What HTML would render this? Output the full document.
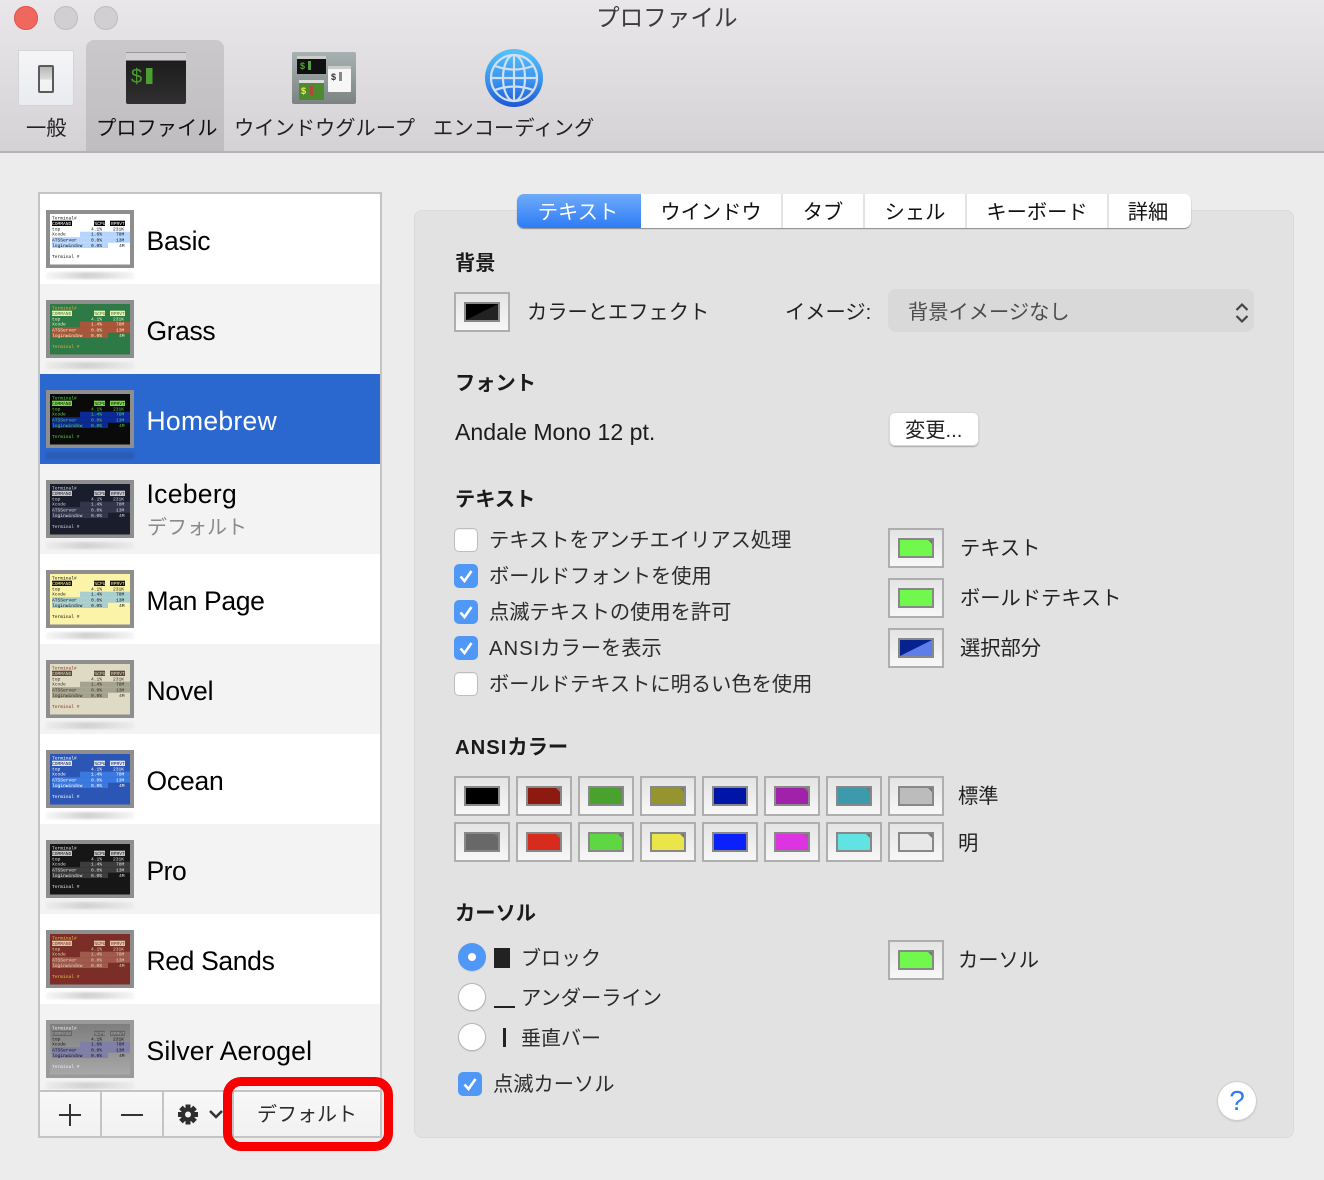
<!DOCTYPE html>
<html lang="ja"><head><meta charset="utf-8"><title>プロファイル</title>
<style>
html,body{margin:0;padding:0}
body{width:1324px;height:1180px;position:relative;overflow:hidden;background:#ececec;font-family:"Liberation Sans","Noto Sans CJK JP",sans-serif;color:#111}
.a,.t,.h,.n{position:absolute}
.t,.h,.n{white-space:nowrap;font-size:20.25px;line-height:28px;margin-top:1px}
.h{font-weight:700;color:#1a1a1a;margin-top:2px}
.n{font-size:26.5px;line-height:32px;left:146.5px;color:#000;margin-top:0}
.row{position:absolute;left:40px;width:340px;height:90px}
.g{background:#f3f3f3}.w{background:#fff}
.th{position:absolute;left:46px;width:88px;height:58px;filter:blur(.35px)}
.th text{font:4.6px "Liberation Mono",monospace}
.sh{position:absolute;left:46px;width:88px;height:7px;background:linear-gradient(90deg,rgba(200,200,200,.15),#d2d2d2 45%,#d8d8d8 60%,rgba(200,200,200,.15));filter:blur(1px)}
.well{position:absolute;width:52px;height:36px;border:2px solid #aeaeae;background:linear-gradient(#e4e4e4,#f7f7f7)}
.well i{position:absolute;left:8px;top:8px;width:32px;height:16px;border:2px solid #888;display:block}
.well.c i:after{content:"";position:absolute;right:0;top:0;border-style:solid;border-width:0 4px 4px 0;border-color:transparent #777 transparent transparent}
.cb{position:absolute;width:24px;height:24px;border-radius:5px;box-sizing:border-box}
.cb.off{background:#fff;border:1px solid #bdbdbd;box-shadow:inset 0 1px 1px #eee}
.cb.on{background:#4f98f7}
.cb svg{position:absolute;left:0;top:0}
.rd{position:absolute;left:458px;width:28px;height:28px;border-radius:50%;box-sizing:border-box;background:#fff;border:1px solid #b5b5b5;box-shadow:0 1px 1px #ccc}
.tab{position:absolute;top:194px;height:34px;line-height:38px;text-align:center;font-size:20.25px;color:#111;background:#fff;border-right:2px solid #e4e4e4;box-sizing:border-box}
</style></head><body>

<!-- Toolbar -->
<div class="a" style="left:0;top:0;width:1324px;height:151px;background:linear-gradient(#e9e7e9,#d4d2d4)"></div>
<div class="a" style="left:0;top:151px;width:1324px;height:2px;background:#b4b3b4"></div>
<div class="a" style="left:14px;top:6px;width:24px;height:24px;border-radius:50%;background:#f0675d;box-shadow:inset 0 0 0 1px #e0554c"></div>
<div class="a" style="left:54px;top:6px;width:24px;height:24px;border-radius:50%;background:#d1cfd1;box-shadow:inset 0 0 0 1px #bfbdbf"></div>
<div class="a" style="left:94px;top:6px;width:24px;height:24px;border-radius:50%;background:#d1cfd1;box-shadow:inset 0 0 0 1px #bfbdbf"></div>
<div class="t" style="left:596px;top:1px;font-size:23.6px;line-height:34px;color:#3d3c3d">プロファイル</div>
<div class="a" style="left:86px;top:40px;width:138px;height:111px;border-radius:8px 8px 0 0;background:linear-gradient(#cac8ca,#bfbdbf)"></div>

<svg class="a" style="left:18px;top:50px" width="56" height="56" viewBox="0 0 56 56">
<defs><linearGradient id="sw" x1="0" y1="0" x2="0" y2="1"><stop offset="0" stop-color="#f5f5f6"/><stop offset="1" stop-color="#e9ebf0"/></linearGradient>
<linearGradient id="sk" x1="0" y1="0" x2="0" y2="1"><stop offset="0" stop-color="#b4b4b4"/><stop offset=".5" stop-color="#dcdcdc"/><stop offset=".55" stop-color="#f4f4f4"/><stop offset="1" stop-color="#f0f0f0"/></linearGradient></defs>
<rect x=".5" y=".5" width="55" height="55" rx="1" fill="url(#sw)" stroke="#d4d4d4"/>
<rect x="21" y="16" width="14" height="26" rx="1" fill="url(#sk)" stroke="#5a5a5a" stroke-width="2"/>
</svg>
<svg class="a" style="left:126px;top:52px" width="60" height="53" viewBox="0 0 60 53">
<defs><linearGradient id="tm" x1="0" y1="0" x2="0" y2="1"><stop offset="0" stop-color="#181818"/><stop offset="1" stop-color="#303030"/></linearGradient></defs>
<rect width="60" height="52" rx="2" fill="url(#tm)"/>
<path d="M0 2a2 2 0 0 1 2-2h56a2 2 0 0 1 2 2v6H0z" fill="#d2d0d2"/>
<rect x="0" y="0" width="60" height="1" fill="#999"/>
<rect x="0" y="8" width="60" height="1" fill="#777"/>
<text x="5" y="31" style="font:20px 'Liberation Sans',sans-serif" fill="#4b9e32">$</text>
<rect x="20" y="16" width="6.500" height="16" fill="#4b9e32"/>
</svg>
<svg class="a" style="left:292px;top:52px" width="64" height="52" viewBox="0 0 64 52">
<defs><linearGradient id="gr" x1="0" y1="0" x2="0" y2="1"><stop offset="0" stop-color="#a8b1b1"/><stop offset="1" stop-color="#7d8383"/></linearGradient></defs>
<rect width="64" height="52" rx="2" fill="url(#gr)"/>
<rect x="5" y="4" width="29" height="18" fill="#111"/><rect x="5" y="4" width="29" height="3" fill="#ccc"/>
<text x="8" y="17" style="font:bold 9px 'Liberation Sans',sans-serif" fill="#4fa33a">$</text><rect x="16" y="9" width="3" height="9" fill="#4fa33a"/>
<rect x="36" y="14" width="23" height="26" rx="1" fill="#f6f6f6"/><rect x="36" y="14" width="23" height="3" fill="#ccc"/>
<text x="39" y="28" style="font:bold 9px 'Liberation Sans',sans-serif" fill="#333">$</text><rect x="47" y="20" width="3" height="9" fill="#888"/>
<rect x="7" y="28" width="25" height="20" rx="1" fill="#4d8a30"/><rect x="7" y="28" width="25" height="3" fill="#ddd"/>
<text x="9" y="42" style="font:bold 9px 'Liberation Sans',sans-serif" fill="#f5ee4a">$</text><rect x="18" y="34" width="3" height="9" fill="#b04a38"/>
</svg>
<svg class="a" style="left:485px;top:49px" width="58" height="58" viewBox="0 0 58 58">
<defs><linearGradient id="gl" x1="0" y1="0" x2="0" y2="1"><stop offset="0" stop-color="#55c3fb"/><stop offset=".55" stop-color="#3a93ee"/><stop offset="1" stop-color="#1f56d4"/></linearGradient></defs>
<circle cx="29" cy="29" r="29" fill="url(#gl)"/>
<g fill="none" stroke="#cfdff0" stroke-width="2.200">
<circle cx="29" cy="29" r="23"/><ellipse cx="29" cy="29" rx="11" ry="23"/>
<path d="M29 6v46M6 29h46M10 17q19 7 38 0M10 41q19-7 38 0"/></g>
</svg>
<div class="t" style="left:26px;top:114px;color:#222">一般</div>
<div class="t" style="left:96px;top:114px;color:#111">プロファイル</div>
<div class="t" style="left:234px;top:114px;color:#222">ウインドウグループ</div>
<div class="t" style="left:433px;top:114px;color:#222;letter-spacing:.1px">エンコーディング</div>

<!-- Left list -->
<div class="a" style="left:38px;top:192px;width:344px;height:946px;background:#fff;box-sizing:border-box;border:2px solid #c4c4c4"></div>
<div class="row w" style="top:194px"></div>
<div class="row g" style="top:284px"></div>
<div class="row" style="top:374px;height:90px;background:#2a68cf"></div>
<div class="row g" style="top:464px"></div>
<div class="row w" style="top:554px"></div>
<div class="row g" style="top:644px"></div>
<div class="row w" style="top:734px"></div>
<div class="row g" style="top:824px"></div>
<div class="row w" style="top:914px"></div>
<div class="row g" style="top:1004px;height:86px"></div>

<svg class="th" style="top:210px" viewBox="0 0 88 58"><rect width="88" height="58" fill="#8e8e8e"/><rect x="4" y="4" width="80" height="50.500" fill="#fff"/><rect x="34" y="21.700" width="50" height="5.500" fill="#b5d5ff"/><rect x="6" y="27.200" width="78" height="5.500" fill="#b5d5ff"/><rect x="6" y="32.700" width="56" height="5.300" fill="#b5d5ff"/><rect x="6" y="10.700" width="20" height="5.300" fill="#000"/><rect x="48" y="10.700" width="11" height="5.300" fill="#000"/><rect x="64" y="10.700" width="15" height="5.300" fill="#000"/><g fill="#111"><text x="6" y="9.300">Terminal#</text><text x="6" y="15" fill="#fff">COMMAND</text><text x="48.500" y="15" fill="#fff">%CPU</text><text x="65" y="15" fill="#fff">RPRVT</text><text x="6" y="20.500">top</text><text x="45" y="20.500">4.1%</text><text x="67" y="20.500">231K</text><text x="6" y="25.500">Xcode</text><text x="45" y="25.500">1.6%</text><text x="70" y="25.500">78M</text><text x="6" y="31.300">ATSServer</text><text x="45" y="31.300">0.0%</text><text x="70" y="31.300">13M</text><text x="6" y="36.800">loginwindow</text><text x="45" y="36.800">0.0%</text><text x="73" y="36.800">4M</text><text x="6" y="48">Terminal #</text></g></svg>
<div class="sh" style="top:272px"></div>
<svg class="th" style="top:300px" viewBox="0 0 88 58"><rect width="88" height="58" fill="#8e8e8e"/><rect x="4" y="4" width="80" height="50.500" fill="#2d7a47"/><rect x="34" y="21.700" width="50" height="5.500" fill="#a9563a"/><rect x="6" y="27.200" width="78" height="5.500" fill="#a9563a"/><rect x="6" y="32.700" width="56" height="5.300" fill="#a9563a"/><rect x="6" y="10.700" width="20" height="5.300" fill="#f5f0a5"/><rect x="48" y="10.700" width="11" height="5.300" fill="#f5f0a5"/><rect x="64" y="10.700" width="15" height="5.300" fill="#f5f0a5"/><g fill="#f5f0c5"><text x="6" y="9.300" fill="#e8a840">Terminal#</text><text x="6" y="15" fill="#2d7a47">COMMAND</text><text x="48.500" y="15" fill="#2d7a47">%CPU</text><text x="65" y="15" fill="#2d7a47">RPRVT</text><text x="6" y="20.500">top</text><text x="45" y="20.500">4.1%</text><text x="67" y="20.500">231K</text><text x="6" y="25.500">Xcode</text><text x="45" y="25.500">1.4%</text><text x="70" y="25.500">78M</text><text x="6" y="31.300">ATSServer</text><text x="45" y="31.300">0.0%</text><text x="70" y="31.300">13M</text><text x="6" y="36.800">loginwindow</text><text x="45" y="36.800">0.0%</text><text x="73" y="36.800">4M</text><text x="6" y="48" fill="#e8a840">Terminal #</text></g></svg>
<div class="sh" style="top:362px"></div>
<svg class="th" style="top:390px" viewBox="0 0 88 58"><rect width="88" height="58" fill="#8e8e8e"/><rect x="4" y="4" width="80" height="50.500" fill="#0a0a0a"/><rect x="34" y="21.700" width="50" height="5.500" fill="#0c2a96"/><rect x="6" y="27.200" width="78" height="5.500" fill="#0c2a96"/><rect x="6" y="32.700" width="56" height="5.300" fill="#0c2a96"/><rect x="6" y="10.700" width="20" height="5.300" fill="#6fe23c"/><rect x="48" y="10.700" width="11" height="5.300" fill="#6fe23c"/><rect x="64" y="10.700" width="15" height="5.300" fill="#6fe23c"/><g fill="#5fd24a"><text x="6" y="9.300">Terminal#</text><text x="6" y="15" fill="#111">COMMAND</text><text x="48.500" y="15" fill="#111">%CPU</text><text x="65" y="15" fill="#111">RPRVT</text><text x="6" y="20.500">top</text><text x="45" y="20.500">4.1%</text><text x="67" y="20.500">231K</text><text x="6" y="25.500">Xcode</text><text x="45" y="25.500">1.4%</text><text x="70" y="25.500">78M</text><text x="6" y="31.300">ATSServer</text><text x="45" y="31.300">0.0%</text><text x="70" y="31.300">13M</text><text x="6" y="36.800">loginwindow</text><text x="45" y="36.800">0.0%</text><text x="73" y="36.800">4M</text><text x="6" y="48">Terminal #</text></g></svg>
<div class="a" style="left:46px;top:452px;width:88px;height:7px;background:#2a5cb5;filter:blur(1px)"></div>
<svg class="th" style="top:480px" viewBox="0 0 88 58"><rect width="88" height="58" fill="#8e8e8e"/><rect x="4" y="4" width="80" height="50.500" fill="#1a1d2b"/><rect x="34" y="21.700" width="50" height="5.500" fill="#33374c"/><rect x="6" y="27.200" width="78" height="5.500" fill="#33374c"/><rect x="6" y="32.700" width="56" height="5.300" fill="#33374c"/><rect x="6" y="10.700" width="20" height="5.300" fill="#c6c8d1"/><rect x="48" y="10.700" width="11" height="5.300" fill="#c6c8d1"/><rect x="64" y="10.700" width="15" height="5.300" fill="#c6c8d1"/><g fill="#d6d8e1"><text x="6" y="9.300">Terminal#</text><text x="6" y="15" fill="#222">COMMAND</text><text x="48.500" y="15" fill="#222">%CPU</text><text x="65" y="15" fill="#222">RPRVT</text><text x="6" y="20.500">top</text><text x="45" y="20.500">4.1%</text><text x="67" y="20.500">231K</text><text x="6" y="25.500">Xcode</text><text x="45" y="25.500">1.4%</text><text x="70" y="25.500">78M</text><text x="6" y="31.300">ATSServer</text><text x="45" y="31.300">0.0%</text><text x="70" y="31.300">13M</text><text x="6" y="36.800">loginwindow</text><text x="45" y="36.800">0.0%</text><text x="73" y="36.800">4M</text><text x="6" y="48">Terminal #</text></g></svg>
<div class="sh" style="top:542px"></div>
<svg class="th" style="top:570px" viewBox="0 0 88 58"><rect width="88" height="58" fill="#8e8e8e"/><rect x="4" y="4" width="80" height="50.500" fill="#fbf3a8"/><rect x="34" y="21.700" width="50" height="5.500" fill="#a9ced0"/><rect x="6" y="27.200" width="78" height="5.500" fill="#a9ced0"/><rect x="6" y="32.700" width="56" height="5.300" fill="#a9ced0"/><rect x="6" y="10.700" width="20" height="5.300" fill="#111"/><rect x="48" y="10.700" width="11" height="5.300" fill="#111"/><rect x="64" y="10.700" width="15" height="5.300" fill="#111"/><g fill="#111"><text x="6" y="9.300">Terminal#</text><text x="6" y="15" fill="#fbf3a8">COMMAND</text><text x="48.500" y="15" fill="#fbf3a8">%CPU</text><text x="65" y="15" fill="#fbf3a8">RPRVT</text><text x="6" y="20.500">top</text><text x="45" y="20.500">4.1%</text><text x="67" y="20.500">231K</text><text x="6" y="25.500">Xcode</text><text x="45" y="25.500">1.4%</text><text x="70" y="25.500">78M</text><text x="6" y="31.300">ATSServer</text><text x="45" y="31.300">0.0%</text><text x="70" y="31.300">13M</text><text x="6" y="36.800">loginwindow</text><text x="45" y="36.800">0.0%</text><text x="73" y="36.800">4M</text><text x="6" y="48">Terminal #</text></g></svg>
<div class="sh" style="top:632px"></div>
<svg class="th" style="top:660px" viewBox="0 0 88 58"><rect width="88" height="58" fill="#8e8e8e"/><rect x="4" y="4" width="80" height="50.500" fill="#dedac3"/><rect x="34" y="21.700" width="50" height="5.500" fill="#a4a38f"/><rect x="6" y="27.200" width="78" height="5.500" fill="#a4a38f"/><rect x="6" y="32.700" width="56" height="5.300" fill="#a4a38f"/><rect x="6" y="10.700" width="20" height="5.300" fill="#5a4a3a"/><rect x="48" y="10.700" width="11" height="5.300" fill="#5a4a3a"/><rect x="64" y="10.700" width="15" height="5.300" fill="#5a4a3a"/><g fill="#3b2a22"><text x="6" y="9.300" fill="#8c3030">Terminal#</text><text x="6" y="15" fill="#dedac3">COMMAND</text><text x="48.500" y="15" fill="#dedac3">%CPU</text><text x="65" y="15" fill="#dedac3">RPRVT</text><text x="6" y="20.500">top</text><text x="45" y="20.500">4.1%</text><text x="67" y="20.500">231K</text><text x="6" y="25.500">Xcode</text><text x="45" y="25.500">1.4%</text><text x="70" y="25.500">78M</text><text x="6" y="31.300">ATSServer</text><text x="45" y="31.300">0.0%</text><text x="70" y="31.300">13M</text><text x="6" y="36.800">loginwindow</text><text x="45" y="36.800">0.0%</text><text x="73" y="36.800">4M</text><text x="6" y="48" fill="#8c3030">Terminal #</text></g></svg>
<div class="sh" style="top:722px"></div>
<svg class="th" style="top:750px" viewBox="0 0 88 58"><rect width="88" height="58" fill="#8e8e8e"/><rect x="4" y="4" width="80" height="50.500" fill="#2b56b5"/><rect x="34" y="21.700" width="50" height="5.500" fill="#3a79e0"/><rect x="6" y="27.200" width="78" height="5.500" fill="#3a79e0"/><rect x="6" y="32.700" width="56" height="5.300" fill="#3a79e0"/><rect x="6" y="10.700" width="20" height="5.300" fill="#dfe6f5"/><rect x="48" y="10.700" width="11" height="5.300" fill="#dfe6f5"/><rect x="64" y="10.700" width="15" height="5.300" fill="#dfe6f5"/><g fill="#fff"><text x="6" y="9.300">Terminal#</text><text x="6" y="15" fill="#224">COMMAND</text><text x="48.500" y="15" fill="#224">%CPU</text><text x="65" y="15" fill="#224">RPRVT</text><text x="6" y="20.500">top</text><text x="45" y="20.500">4.1%</text><text x="67" y="20.500">231K</text><text x="6" y="25.500">Xcode</text><text x="45" y="25.500">1.4%</text><text x="70" y="25.500">78M</text><text x="6" y="31.300">ATSServer</text><text x="45" y="31.300">0.0%</text><text x="70" y="31.300">13M</text><text x="6" y="36.800">loginwindow</text><text x="45" y="36.800">0.0%</text><text x="73" y="36.800">4M</text><text x="6" y="48">Terminal #</text></g></svg>
<div class="sh" style="top:812px"></div>
<svg class="th" style="top:840px" viewBox="0 0 88 58"><rect width="88" height="58" fill="#8e8e8e"/><rect x="4" y="4" width="80" height="50.500" fill="#161616"/><rect x="34" y="21.700" width="50" height="5.500" fill="#3c3c3c"/><rect x="6" y="27.200" width="78" height="5.500" fill="#3c3c3c"/><rect x="6" y="32.700" width="56" height="5.300" fill="#3c3c3c"/><rect x="6" y="10.700" width="20" height="5.300" fill="#c8c8c8"/><rect x="48" y="10.700" width="11" height="5.300" fill="#c8c8c8"/><rect x="64" y="10.700" width="15" height="5.300" fill="#c8c8c8"/><g fill="#e2e2e2"><text x="6" y="9.300">Terminal#</text><text x="6" y="15" fill="#111">COMMAND</text><text x="48.500" y="15" fill="#111">%CPU</text><text x="65" y="15" fill="#111">RPRVT</text><text x="6" y="20.500">top</text><text x="45" y="20.500">4.1%</text><text x="67" y="20.500">231K</text><text x="6" y="25.500">Xcode</text><text x="45" y="25.500">1.4%</text><text x="70" y="25.500">78M</text><text x="6" y="31.300">ATSServer</text><text x="45" y="31.300">0.0%</text><text x="70" y="31.300">13M</text><text x="6" y="36.800">loginwindow</text><text x="45" y="36.800">0.0%</text><text x="73" y="36.800">4M</text><text x="6" y="48">Terminal #</text></g></svg>
<div class="sh" style="top:902px"></div>
<svg class="th" style="top:930px" viewBox="0 0 88 58"><rect width="88" height="58" fill="#8e8e8e"/><rect x="4" y="4" width="80" height="50.500" fill="#7b2e27"/><rect x="34" y="21.700" width="50" height="5.500" fill="#a05a4c"/><rect x="6" y="27.200" width="78" height="5.500" fill="#a05a4c"/><rect x="6" y="32.700" width="56" height="5.300" fill="#a05a4c"/><rect x="6" y="10.700" width="20" height="5.300" fill="#d7c9a7"/><rect x="48" y="10.700" width="11" height="5.300" fill="#d7c9a7"/><rect x="64" y="10.700" width="15" height="5.300" fill="#d7c9a7"/><g fill="#e2d6b8"><text x="6" y="9.300" fill="#e8c040">Terminal#</text><text x="6" y="15" fill="#7b2e27">COMMAND</text><text x="48.500" y="15" fill="#7b2e27">%CPU</text><text x="65" y="15" fill="#7b2e27">RPRVT</text><text x="6" y="20.500">top</text><text x="45" y="20.500">4.1%</text><text x="67" y="20.500">231K</text><text x="6" y="25.500">Xcode</text><text x="45" y="25.500">1.4%</text><text x="70" y="25.500">78M</text><text x="6" y="31.300">ATSServer</text><text x="45" y="31.300">0.0%</text><text x="70" y="31.300">13M</text><text x="6" y="36.800">loginwindow</text><text x="45" y="36.800">0.0%</text><text x="73" y="36.800">4M</text><text x="6" y="48" fill="#e8c040">Terminal #</text></g></svg>
<div class="sh" style="top:992px"></div>
<svg class="th" style="top:1020px" viewBox="0 0 88 58"><defs><linearGradient id="sa" x1="0" y1="0" x2="0" y2="1"><stop offset="0" stop-color="#7e7e7e"/><stop offset="1" stop-color="#a8a8a8"/></linearGradient></defs><rect width="88" height="58" fill="#9a9a9a"/><rect x="4" y="4" width="80" height="50.500" fill="url(#sa)"/><rect x="34" y="21.700" width="50" height="5.500" fill="#7f7fa8"/><rect x="6" y="27.200" width="78" height="5.500" fill="#7f7fa8"/><rect x="6" y="32.700" width="56" height="5.300" fill="#7f7fa8"/><rect x="6" y="10.700" width="20" height="5.300" fill="#666"/><rect x="48" y="10.700" width="11" height="5.300" fill="#666"/><rect x="64" y="10.700" width="15" height="5.300" fill="#666"/><g fill="#111"><text x="6" y="9.300" fill="#eee">Terminal#</text><text x="6" y="15" fill="#aaa">COMMAND</text><text x="48.500" y="15" fill="#aaa">%CPU</text><text x="65" y="15" fill="#aaa">RPRVT</text><text x="6" y="20.500">top</text><text x="45" y="20.500">4.1%</text><text x="67" y="20.500">231K</text><text x="6" y="25.500">Xcode</text><text x="45" y="25.500">1.6%</text><text x="70" y="25.500">78M</text><text x="6" y="31.300">ATSServer</text><text x="45" y="31.300">0.0%</text><text x="70" y="31.300">13M</text><text x="6" y="36.800">loginwindow</text><text x="45" y="36.800">0.0%</text><text x="73" y="36.800">4M</text><text x="6" y="48" fill="#eee">Terminal #</text></g></svg>
<div class="sh" style="top:1082px"></div>

<div class="n" style="top:225px;letter-spacing:-.2px">Basic</div>
<div class="n" style="top:315px;letter-spacing:-.4px">Grass</div>
<div class="n" style="top:405px;color:#fff;letter-spacing:.3px">Homebrew</div>
<div class="n" style="top:478px;letter-spacing:.3px">Iceberg</div>
<div class="t" style="left:147px;top:513px;color:#8a8a8a;font-size:20px;margin-top:1px">デフォルト</div>
<div class="n" style="top:585px;letter-spacing:-.35px">Man Page</div>
<div class="n" style="top:675px;letter-spacing:-.2px">Novel</div>
<div class="n" style="top:765px;letter-spacing:-.2px">Ocean</div>
<div class="n" style="top:855px;letter-spacing:-.5px">Pro</div>
<div class="n" style="top:945px;letter-spacing:-.35px">Red Sands</div>
<div class="n" style="top:1035px;letter-spacing:.15px">Silver Aerogel</div>

<!-- list footer -->
<div class="a" style="left:40px;top:1090px;width:340px;height:46px;background:linear-gradient(#f8f8f8,#f1f1f1);border-top:2px solid #c4c4c4;box-sizing:border-box"></div>
<div class="a" style="left:100px;top:1092px;width:2px;height:44px;background:#c4c4c4"></div>
<div class="a" style="left:162px;top:1092px;width:2px;height:44px;background:#c4c4c4"></div>
<div class="a" style="left:59px;top:1114px;width:22px;height:2px;background:#333"></div>
<div class="a" style="left:69px;top:1104px;width:2px;height:22px;background:#333"></div>
<div class="a" style="left:121px;top:1114px;width:22px;height:2px;background:#333"></div>
<svg class="a" style="left:178px;top:1104px" width="46" height="22" viewBox="0 0 46 22">
<g fill="#2e2e2e" transform="translate(10 10.500)"><circle r="7"/><rect x="-2.500" y="-10" width="5" height="20"/><rect x="-2.500" y="-10" width="5" height="20" transform="rotate(45)"/><rect x="-2.500" y="-10" width="5" height="20" transform="rotate(90)"/><rect x="-2.500" y="-10" width="5" height="20" transform="rotate(135)"/></g>
<circle cx="10" cy="10.500" r="3" fill="#f4f4f4"/>
<path d="M32 7l6 6 6-6" fill="none" stroke="#333" stroke-width="2.500"/></svg>
<div class="a" style="left:232px;top:1092px;width:2px;height:44px;background:#c4c4c4"></div>
<div class="t" style="left:257px;top:1100px;color:#2b2b2b;font-size:20px">デフォルト</div>
<div class="a" style="left:223px;top:1077px;width:170px;height:74px;box-sizing:border-box;border:9px solid #f80000;border-radius:18px"></div>

<!-- Right panel -->
<div class="a" style="left:414px;top:210px;width:880px;height:928px;box-sizing:border-box;background:#e2e2e2;border:1px solid #dadada;border-radius:8px"></div>
<div class="a" style="left:517px;top:194px;width:674px;height:34px;border-radius:7px;box-shadow:0 1px 1px rgba(0,0,0,.4);background:#fff"></div>
<div class="tab" style="left:517px;width:122px;border:0;border-radius:7px 0 0 7px;color:#fff;background:linear-gradient(#6fabf9,#2d7bf6)">テキスト</div>
<div class="a" style="left:630px;top:194px;width:11px;height:34px;background:linear-gradient(#6fabf9,#2d7bf6)"></div>
<div class="tab" style="left:641px;width:142px">ウインドウ</div>
<div class="tab" style="left:783px;width:82px">タブ</div>
<div class="tab" style="left:865px;width:102px">シェル</div>
<div class="tab" style="left:967px;width:140px;border-right:0">キーボード</div>
<div class="a" style="left:1107px;top:194px;width:2px;height:34px;background:#e4e4e4"></div>
<div class="tab" style="left:1109px;width:78px;border:0;background:transparent">詳細</div>

<div class="h" style="left:455px;top:248px">背景</div>
<div class="well" style="left:454px;top:292px"><i style="background:linear-gradient(to bottom right,#000 50%,#222 50%)"></i></div>
<div class="t" style="left:527px;top:298px;color:#222">カラーとエフェクト</div>
<div class="t" style="left:785px;top:298px;color:#222">イメージ:</div>
<div class="a" style="left:888px;top:289px;width:366px;height:43px;border-radius:8px;background:#d9d9d9"></div>
<div class="t" style="left:908px;top:298px;color:#4c4c4c">背景イメージなし</div>
<svg class="a" style="left:1234px;top:302px" width="16" height="22" viewBox="0 0 16 22"><path d="M2.500 8L8 2.500 13.500 8M2.500 14L8 19.500 13.500 14" fill="none" stroke="#444" stroke-width="2.200"/></svg>

<div class="h" style="left:455px;top:368px">フォント</div>
<div class="t" style="left:455px;top:418px;font-size:23.1px;color:#1c1c1c;margin-top:0">Andale Mono 12 pt.</div>
<div class="a" style="left:889px;top:412px;width:90px;height:34px;box-sizing:border-box;border-radius:6px;background:#fff;box-shadow:inset 0 0 0 1px #d8d8d8,0 1px 1px #aaa"></div>
<div class="t" style="left:905px;top:416px;color:#222">変更...</div>

<div class="h" style="left:455px;top:484px">テキスト</div>
<div class="cb off" style="left:454px;top:528px"></div>
<div class="t" style="left:489px;top:526px;color:#2c2c2c">テキストをアンチエイリアス処理</div>
<div class="cb on" style="left:454px;top:564px"><svg width="24" height="24" viewBox="0 0 24 24"><path d="M6.500 12.500l4 4.500 7-10" fill="none" stroke="#fff" stroke-width="2.600"/></svg></div>
<div class="t" style="left:489px;top:562px;color:#2c2c2c">ボールドフォントを使用</div>
<div class="cb on" style="left:454px;top:600px"><svg width="24" height="24" viewBox="0 0 24 24"><path d="M6.500 12.500l4 4.500 7-10" fill="none" stroke="#fff" stroke-width="2.600"/></svg></div>
<div class="t" style="left:489px;top:598px;color:#2c2c2c">点滅テキストの使用を許可</div>
<div class="cb on" style="left:454px;top:636px"><svg width="24" height="24" viewBox="0 0 24 24"><path d="M6.500 12.500l4 4.500 7-10" fill="none" stroke="#fff" stroke-width="2.600"/></svg></div>
<div class="t" style="left:489px;top:634px;color:#2c2c2c"><span style="letter-spacing:1px">ANSI</span>カラーを表示</div>
<div class="cb off" style="left:454px;top:672px"></div>
<div class="t" style="left:489px;top:670px;color:#2c2c2c">ボールドテキストに明るい色を使用</div>

<div class="well c" style="left:888px;top:528px"><i style="background:#70f84c"></i></div>
<div class="t" style="left:960px;top:534px;color:#222">テキスト</div>
<div class="well" style="left:888px;top:578px"><i style="background:#70f84c"></i></div>
<div class="t" style="left:960px;top:584px;color:#222">ボールドテキスト</div>
<div class="well" style="left:888px;top:628px"><i style="background:linear-gradient(to bottom right,#062290 50%,#5e7de8 50%)"></i></div>
<div class="t" style="left:960px;top:634px;color:#222">選択部分</div>

<div class="h" style="left:455px;top:732px"><span style="letter-spacing:1px">ANSI</span>カラー</div>
<div class="well" style="left:454px;top:776px"><i style="background:#000"></i></div>
<div class="well c" style="left:516px;top:776px"><i style="background:#8c1a10"></i></div>
<div class="well c" style="left:578px;top:776px"><i style="background:#48a22d"></i></div>
<div class="well c" style="left:640px;top:776px"><i style="background:#96942e"></i></div>
<div class="well" style="left:702px;top:776px"><i style="background:#0014a8"></i></div>
<div class="well c" style="left:764px;top:776px"><i style="background:#a221ab"></i></div>
<div class="well c" style="left:826px;top:776px"><i style="background:#3d9aaa"></i></div>
<div class="well c" style="left:888px;top:776px"><i style="background:#bcbcbc"></i></div>
<div class="t" style="left:958px;top:782px;color:#222">標準</div>
<div class="well c" style="left:454px;top:822px"><i style="background:#686868"></i></div>
<div class="well c" style="left:516px;top:822px"><i style="background:#d72b1e"></i></div>
<div class="well c" style="left:578px;top:822px"><i style="background:#5fd742"></i></div>
<div class="well c" style="left:640px;top:822px"><i style="background:#eae548"></i></div>
<div class="well" style="left:702px;top:822px"><i style="background:#0a21fb"></i></div>
<div class="well c" style="left:764px;top:822px"><i style="background:#db34e0"></i></div>
<div class="well c" style="left:826px;top:822px"><i style="background:#62e3e3"></i></div>
<div class="well c" style="left:888px;top:822px"><i style="background:#e8e8e8"></i></div>
<div class="t" style="left:958px;top:829px;color:#222">明</div>

<div class="h" style="left:455px;top:898px">カーソル</div>
<div class="rd" style="top:943px;background:#4f98f7;border:0"></div>
<div class="a" style="left:468px;top:953px;width:8px;height:8px;border-radius:50%;background:#fff"></div>
<div class="a" style="left:494px;top:948px;width:16px;height:20px;background:#222"></div>
<div class="t" style="left:521px;top:944px;color:#2c2c2c;font-size:20px">ブロック</div>
<div class="rd" style="top:983px"></div>
<div class="a" style="left:494px;top:1006px;width:21px;height:2px;background:#222"></div>
<div class="t" style="left:521px;top:984px;color:#2c2c2c">アンダーライン</div>
<div class="rd" style="top:1023px"></div>
<div class="a" style="left:503px;top:1028px;width:3px;height:19px;background:#222"></div>
<div class="t" style="left:521px;top:1024px;color:#2c2c2c;font-size:20px">垂直バー</div>
<div class="cb on" style="left:458px;top:1072px"><svg width="24" height="24" viewBox="0 0 24 24"><path d="M6.500 12.500l4 4.500 7-10" fill="none" stroke="#fff" stroke-width="2.600"/></svg></div>
<div class="t" style="left:493px;top:1070px;color:#2c2c2c">点滅カーソル</div>
<div class="well c" style="left:888px;top:940px"><i style="background:#70f84c"></i></div>
<div class="t" style="left:958px;top:946px;color:#222">カーソル</div>

<div class="a" style="left:1218px;top:1082px;width:38px;height:38px;border-radius:50%;background:#fff;box-shadow:0 0 0 1px #cfcfcf,0 1px 2px #aaa;text-align:center;line-height:38px;font-size:28px;color:#2f7ef0">?</div>
</body></html>
